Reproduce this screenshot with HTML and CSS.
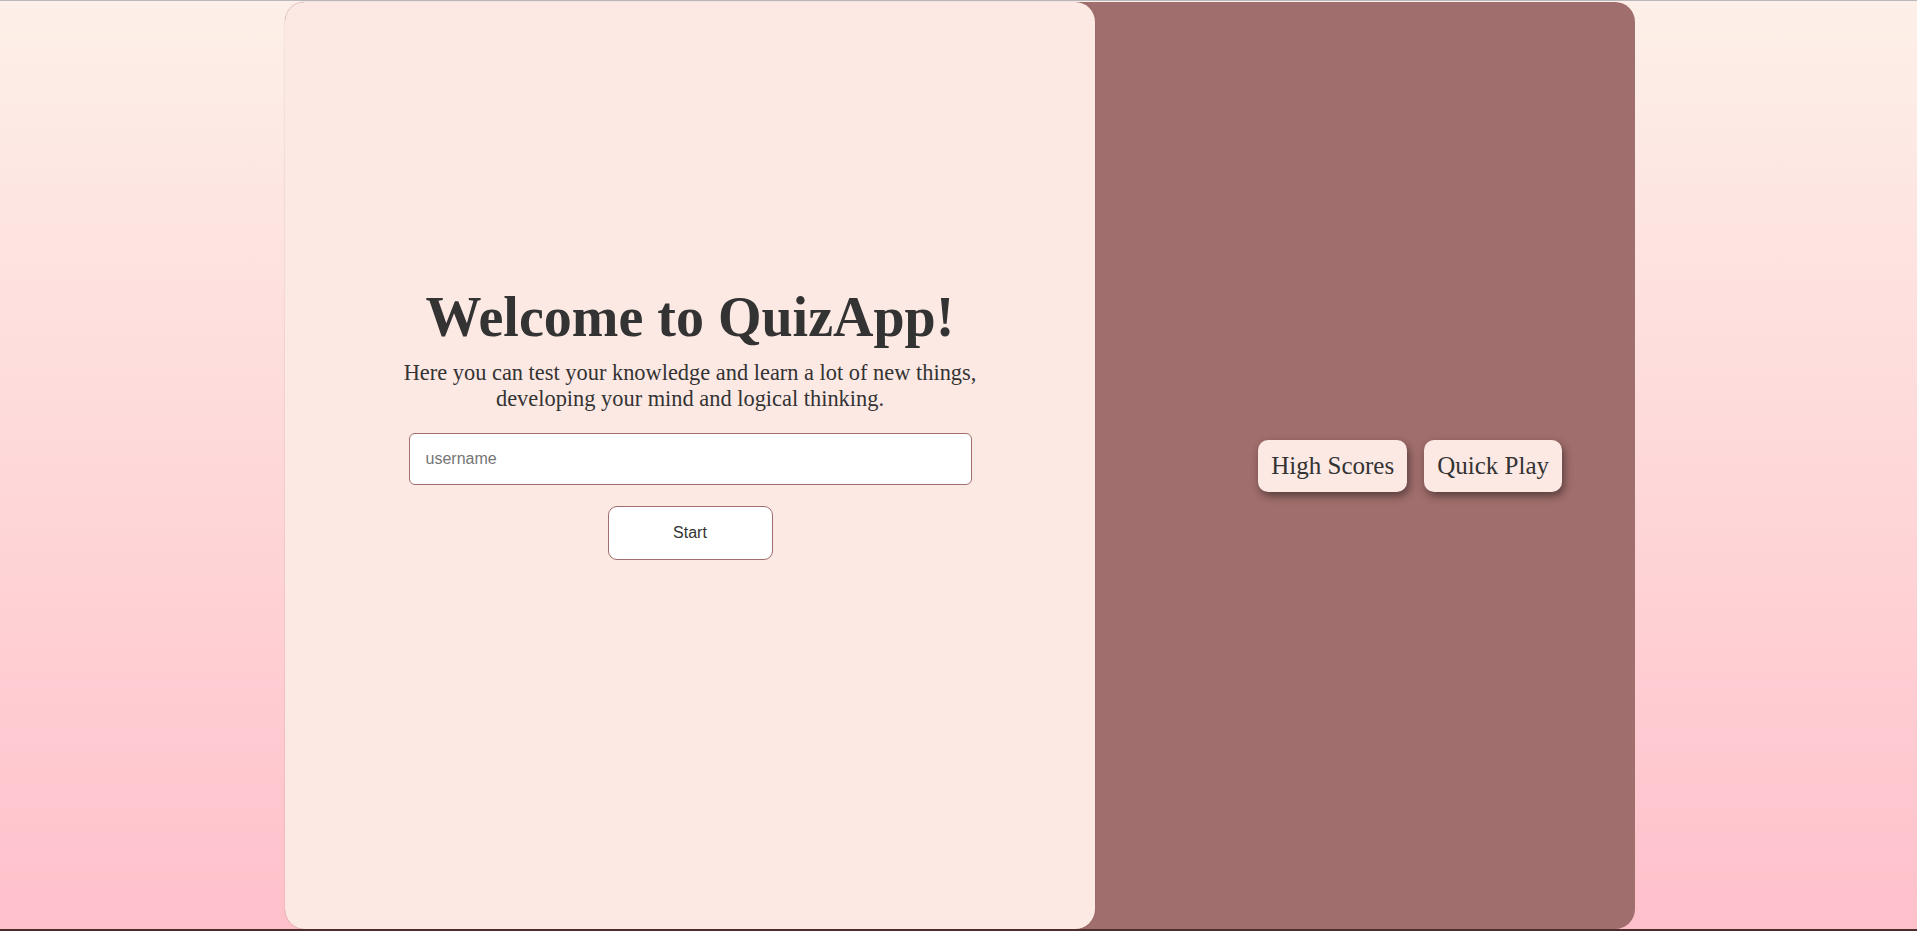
FILE: index.html
```html
<!DOCTYPE html>
<html lang="en">
<head>
<meta charset="utf-8">
<title>QuizApp</title>
<link rel="stylesheet" href="styles.css">
</head>
<body>
<div class="topline"></div>
<main class="card">
  <section class="welcome">
    <h1 class="title">Welcome to QuizApp!</h1>
    <p class="subtitle">Here you can test your knowledge and learn a lot of new things,<br>developing your mind and logical thinking.</p>
    <input class="username" type="text" placeholder="username">
    <button class="start" type="button">Start</button>
  </section>
  <section class="actions">
    <button class="action" type="button">High Scores</button>
    <button class="action" type="button">Quick Play</button>
  </section>
</main>
<div class="bottomline"></div>
</body>
</html>
```
FILE: styles.css
```css
html, body {
  margin: 0;
  padding: 0;
  height: 100%;
}
body {
  display: flex;
  flex-direction: column;
  background: linear-gradient(to bottom, #fdf0e8 0%, #ffc0cb 100%);
  font-family: "Liberation Serif", "Times New Roman", serif;
  color: #333;
  overflow: hidden;
}
.topline {
  height: 1px;
  margin-bottom: 1px;
  background: #b9b8be;
  flex: none;
}
.bottomline {
  height: 2px;
  background: #4d2d2b;
  flex: none;
}
.card {
  flex: 1;
  width: 1350px;
  margin: 0 282px 0 auto;
  display: flex;
  background: #a06e6c;
  border-radius: 20px;
  box-sizing: border-box;
}
.welcome {
  width: 810px;
  flex: none;
  background: #fde9e4;
  border-radius: 20px;
  box-shadow: 0 0 2px rgba(120, 80, 80, 0.25);
  display: flex;
  flex-direction: column;
  align-items: center;
  justify-content: center;
  padding-bottom: 86px;
  box-sizing: border-box;
}
.title {
  margin: 0 0 11px;
  font-size: 56px;
  font-weight: bold;
  line-height: normal;
  color: #333;
}
.subtitle {
  margin: 0 0 21px;
  font-size: 22.4px;
  line-height: normal;
  text-align: center;
  color: #333;
}
.username {
  width: 563px;
  height: 52px;
  box-sizing: border-box;
  padding: 0 16px;
  border: 1px solid #a06e6c;
  border-radius: 6px;
  background: #fff;
  font-family: "Liberation Sans", Arial, sans-serif;
  font-size: 16px;
  color: #333;
  margin: 0 0 21px;
}
.username::placeholder {
  color: #757575;
}
.start {
  width: 165px;
  height: 54px;
  box-sizing: border-box;
  border: 1px solid #a06e6c;
  border-radius: 9px;
  background: #fff;
  font-family: "Liberation Sans", Arial, sans-serif;
  font-size: 16px;
  color: #333;
}
.actions {
  flex: 1;
  display: flex;
  align-items: center;
  justify-content: flex-end;
  gap: 17px;
  padding-right: 73px;
}
.action {
  font-family: "Liberation Serif", "Times New Roman", serif;
  font-size: 25px;
  line-height: normal;
  color: #333;
  background: #fde9e4;
  border: none;
  border-radius: 10px;
  padding: 12px 13px;
  box-shadow: 2px 4px 8px rgba(0, 0, 0, 0.45);
}
```
